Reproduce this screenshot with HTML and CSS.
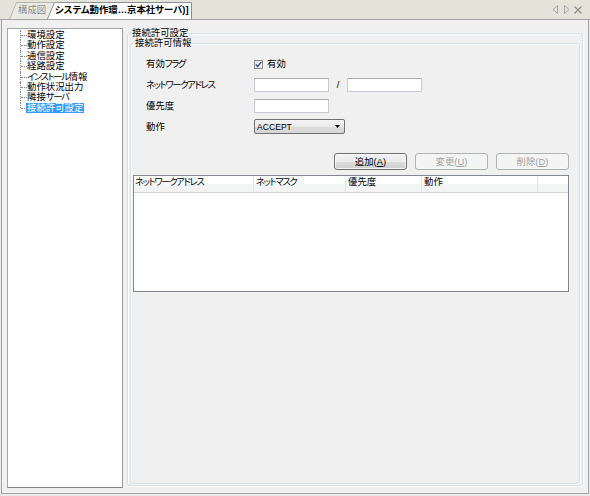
FILE: index.html
```html
<!DOCTYPE html>
<html lang="ja">
<head>
<meta charset="utf-8">
<link rel="stylesheet" href="styles.css">
</head>
<body>
<div class="window">
  <div class="tabbar">
    <div class="tab tab-inactive">
      <svg class="shape" width="48" height="18" viewBox="0 0 48 18"><path d="M0.5 18 L7.5 1.5 L47.5 1.5 L47.5 18" fill="#ebe9e3" stroke="#b9b6ad"/></svg>
      <span>構成図</span>
    </div>
    <div class="tab tab-active">
      <svg class="shape" width="146" height="18" viewBox="0 0 146 18"><path d="M0.5 18 L7.5 1.5 L144.5 1.5 L144.5 18" fill="#ffffff" stroke="#8c9092"/></svg>
      <span>システム動作環…京本社サーバ)]</span>
    </div>
    <div class="tabctl">
      <svg width="7" height="9" viewBox="0 0 7 9"><path d="M5.5 0.5 L1 4.5 L5.5 8.5 Z" fill="none" stroke="#a8a8a8"/></svg>
      <svg width="7" height="9" viewBox="0 0 7 9"><path d="M1.5 0.5 L6 4.5 L1.5 8.5 Z" fill="none" stroke="#a8a8a8"/></svg>
      <svg width="8" height="8" viewBox="0 0 8 8"><path d="M0.5 0.5 L7.5 7.5 M7.5 0.5 L0.5 7.5" stroke="#8e8e8e" stroke-width="1.3"/></svg>
    </div>
  </div>
  <div class="main">
    <div class="tree">
      <ul class="tree-list">
        <li>環境設定</li>
        <li>動作設定</li>
        <li>通信設定</li>
        <li>経路設定</li>
        <li><span class="kana">インストール</span>情報</li>
        <li>動作状況出力</li>
        <li>隣接<span class="kana">サーバ</span></li>
        <li class="last"><span class="sel">接続許可設定</span></li>
      </ul>
    </div>
    <fieldset class="group outer">
      <legend>接続許可設定</legend>
      <fieldset class="group inner">
        <legend>接続許可情報</legend>
        <div class="form">
          <div class="lbl">有効<span class="kana">フラグ</span></div>
          <div class="fld"><span class="cb"><svg width="7" height="7" viewBox="0 0 7 7"><path d="M0.8 3.6 L2.7 5.6 L6.3 0.9" fill="none" stroke="#3d4f86" stroke-width="1.4"/></svg></span><span class="cb-text">有効</span></div>
          <div class="lbl"><span class="kana">ネットワークアドレス</span></div>
          <div class="fld"><span class="input"></span><span class="slash">/</span><span class="input"></span></div>
          <div class="lbl">優先度</div>
          <div class="fld"><span class="input"></span></div>
          <div class="lbl">動作</div>
          <div class="fld"><span class="select"><span class="sel-text">ACCEPT</span><svg width="5" height="3" viewBox="0 0 5 3"><path d="M0 0 L5 0 L2.5 3 Z" fill="#000"/></svg></span></div>
        </div>
        <div class="buttons">
          <span class="btn">追加(<u>A</u>)</span>
          <span class="btn disabled">変更(<u>U</u>)</span>
          <span class="btn disabled">削除(<u>D</u>)</span>
        </div>
        <div class="table">
          <div class="thead">
            <span class="th c1"><span class="kana">ネットワークアドレス</span></span>
            <span class="th c2"><span class="kana">ネットマスク</span></span>
            <span class="th c3">優先度</span>
            <span class="th c4">動作</span>
            <span class="th c5"></span>
          </div>
        </div>
      </fieldset>
    </fieldset>
  </div>
</div>
</body>
</html>
```
FILE: styles.css
```css
* { box-sizing: border-box; }
html, body { margin: 0; padding: 0; }
body {
  width: 590px;
  height: 496px;
  overflow: hidden;
  background: #ebebeb;
  font-family: "Liberation Sans", "Noto Sans CJK JP", sans-serif;
  font-size: 9.4px;
  font-feature-settings: "palt";
  color: #000;
}
.window { width: 590px; height: 496px; display: flex; flex-direction: column; }
.kana { letter-spacing: -1.4px; }

/* tab bar */
.tabbar {
  flex: none;
  height: 20px;
  background: #e5e2d9;
  border-bottom: 1px solid #a3a3a3;
  display: flex;
  align-items: flex-end;
  padding-left: 9px;
}
.tab { position: relative; height: 18px; display: flex; align-items: center; line-height: 10px; }
.tab .shape { position: absolute; left: 0; top: 0; }
.tab span { position: relative; }
.tab-inactive { width: 48px; padding-left: 9px; color: #8d8d8d; }
.tab-active { width: 146px; margin-left: -10px; padding-left: 8px; font-weight: bold; }
.tabctl {
  margin-left: auto;
  align-self: center;
  display: flex;
  align-items: center;
  gap: 4px;
  padding-right: 8px;
}

/* main area */
.main {
  flex: none;
  height: 474px;
  margin: 0 1px;
  border: 1px solid #a3a3a3;
  border-top: none;
  background: #f0f0f0;
  display: flex;
  align-items: flex-start;
  padding: 8px 0 5px 5px;
}

/* tree */
.tree {
  width: 116px;
  height: 460px;
  background: #fff;
  border: 1px solid #a5a5a5;
  border-bottom-color: #848484;
  border-right-color: #9a9a9a;
}
.tree-list { list-style: none; margin: 0; padding: 1px 0 0 19px; }
.tree-list li {
  position: relative;
  height: 10.4px;
  line-height: 10.4px;
  white-space: nowrap;
}
.tree-list li::before {
  content: "";
  position: absolute;
  left: -6px;
  top: 5px;
  width: 6px;
  border-top: 1px dotted #8a8a8a;
}
.tree-list li::after {
  content: "";
  position: absolute;
  left: -7px;
  top: 0;
  height: 10.4px;
  border-left: 1px dotted #8a8a8a;
}
.tree-list li.last::after { height: 5px; }
.sel { background: #3399ff; color: #fff; padding: 0 1px; margin-left: -1px; display: inline-block; height: 10.4px; }

/* group boxes */
.group {
  margin: 0;
  padding: 0;
  min-width: 0;
  border: 1px solid #d5dfe5;
  border-radius: 3px;
  box-shadow: inset 1px 1px 0 #fff, 1px 1px 0 #fff;
  display: flex;
  flex-direction: column;
}
.group legend {
  margin-left: 3px;
  padding: 0 1px;
  line-height: 10px;
  height: 10px;
}
.outer { width: 456px; height: 458px; margin: 0 0 0 4px; }
.inner { flex: 1; margin: 0 2px 1px 2px; }

/* form */
.form {
  display: grid;
  grid-template-columns: 108px auto;
  grid-template-rows: 20px 21px 21px 21px;
  align-items: center;
  margin: 6px 0 0 15px;
}
.lbl { line-height: 10px; }
.fld { display: flex; align-items: center; }
.cb {
  width: 9px;
  height: 9px;
  border: 1px solid #8e8f8f;
  background: linear-gradient(135deg, #e2e2e2, #fbfbfb);
  display: flex;
  align-items: center;
  justify-content: center;
}
.cb-text { margin-left: 4px; line-height: 10px; }
.input {
  width: 75px;
  height: 14px;
  background: #fff;
  border: 1px solid #c7cbd1;
  border-top-color: #abadb3;
}
.slash { width: 18px; text-align: center; line-height: 10px; }
.select {
  width: 91px;
  height: 15px;
  border: 1px solid #707070;
  border-radius: 2px;
  background: linear-gradient(#f4f4f4, #e9e9e9 50%, #dcdcdc 51%, #d6d6d6);
  display: flex;
  align-items: center;
  justify-content: space-between;
  padding: 0 4px 0 2px;
}
.sel-text { font-size: 8.6px; line-height: 10px; }

/* buttons */
.buttons {
  display: flex;
  justify-content: flex-end;
  gap: 8px;
  margin: 16px 10px 0 0;
}
.btn {
  width: 73px;
  height: 17px;
  border: 1px solid #707070;
  border-radius: 3px;
  background: linear-gradient(#f2f2f2, #ebebeb 50%, #dddddd 51%, #cfcfcf);
  display: flex;
  align-items: center;
  justify-content: center;
  line-height: 10px;
  box-shadow: inset 0 0 0 1px rgba(255,255,255,0.7);
}
.btn u { text-underline-offset: 1px; }
.btn.disabled {
  border-color: #adb2b5;
  background: #f4f4f4;
  color: #a0a0a0;
  box-shadow: none;
}

/* table */
.table {
  margin: 5px 10px 0 2px;
  height: 117px;
  background: #fff;
  border: 1px solid #828790;
}
.thead {
  display: flex;
  height: 17px;
  background: linear-gradient(#ffffff, #ffffff 50%, #f4f5f7 51%, #f3f3f3);
  border-bottom: 1px solid #d5d5d5;
}
.th {
  height: 16px;
  line-height: 12px;
  padding-left: 2px;
  border-right: 1px solid #e3e4e6;
  white-space: nowrap;
}
.c1 { width: 120px; padding-left: 1px; }
.c2 { width: 92px; }
.c3 { width: 76px; }
.c4 { width: 116px; }
.c5 { flex: 1; border-right: none; }
```
